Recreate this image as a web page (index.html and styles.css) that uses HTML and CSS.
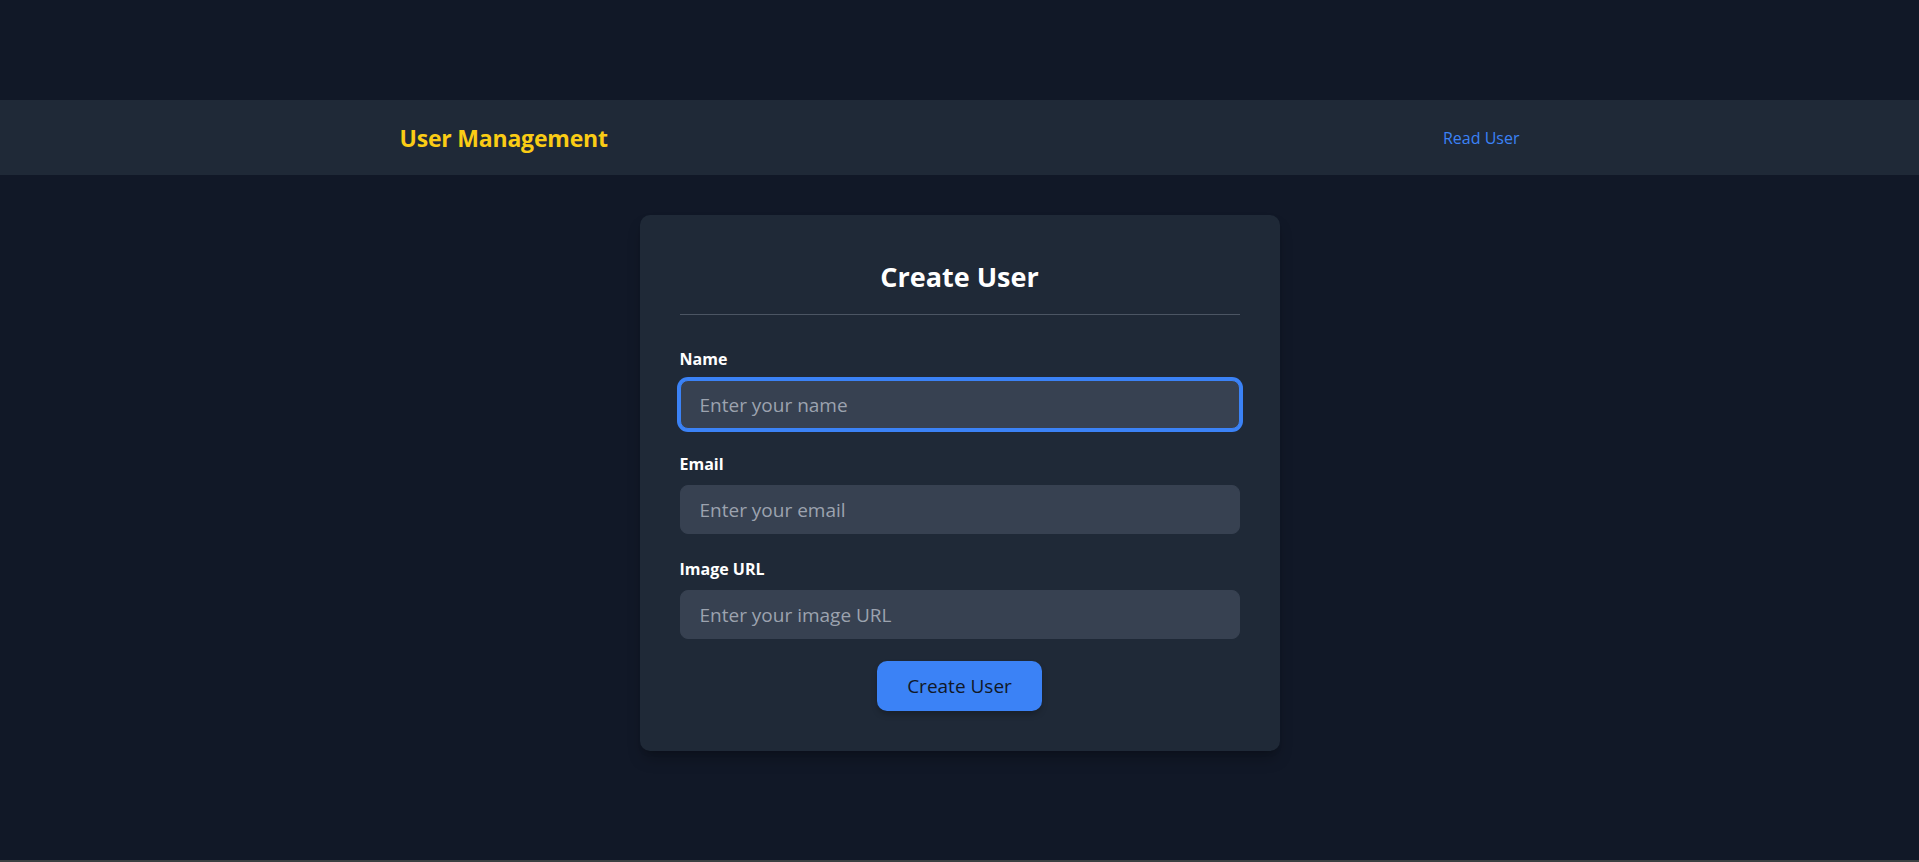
FILE: index.html
```html
<!DOCTYPE html>
<html lang="en">
<head>
<meta charset="utf-8">
<title>User Management</title>
<link rel="stylesheet" href="styles.css">
</head>
<body>
<div class="page">
  <header class="navbar">
    <div class="nav-inner">
      <span class="brand">User Management</span>
      <a class="nav-link" href="#">Read User</a>
    </div>
  </header>
  <main class="main">
    <form class="card">
      <h1 class="card-title">Create User</h1>
      <hr class="divider">
      <div class="field">
        <label class="label" for="name">Name</label>
        <input class="input input-focus" id="name" type="text" placeholder="Enter your name">
      </div>
      <div class="field">
        <label class="label" for="email">Email</label>
        <input class="input" id="email" type="email" placeholder="Enter your email">
      </div>
      <div class="field field-last">
        <label class="label" for="image">Image URL</label>
        <input class="input" id="image" type="text" placeholder="Enter your image URL">
      </div>
      <div class="actions">
        <button class="btn" type="button">Create User</button>
      </div>
    </form>
  </main>
</div>
</body>
</html>
```

FILE: styles.css
```css
* { box-sizing: border-box; }
html, body { margin: 0; padding: 0; }
body {
  background: #111827;
  font-family: "Open Sans", "Noto Sans", "Liberation Sans", sans-serif;
  color: #ffffff;
}
.page {
  min-height: 100vh;
  padding-top: 100px;
  border-bottom: 2px solid #3b4143;
  display: flex;
  flex-direction: column;
}
.navbar {
  background: #1f2937;
  height: 75px;
  display: flex;
  align-items: center;
}
.nav-inner {
  width: 1152px;
  margin: 0 auto;
  padding: 0 16px;
  display: flex;
  justify-content: space-between;
  align-items: center;
}
.brand {
  color: #facc15;
  font-weight: 700;
  font-size: 23px;
  letter-spacing: -0.2px;
  line-height: 32px;
}
.nav-link {
  color: #3b82f6;
  text-decoration: none;
  font-size: 16px;
  line-height: 24px;
}
.main {
  display: flex;
  justify-content: center;
  padding-top: 40px;
}
.card {
  width: 640px;
  background: #1f2937;
  border-radius: 10px;
  padding: 40px;
  box-shadow: 0 10px 15px -3px rgba(0,0,0,0.25), 0 4px 6px -4px rgba(0,0,0,0.2);
}
.card-title {
  margin: 0;
  text-align: center;
  font-size: 27px;
  font-weight: 700;
  line-height: 44px;
  color: #ffffff;
}
.divider {
  border: 0;
  height: 1px;
  background: #4b5563;
  margin: 15px 0 32px;
}
.field {
  display: flex;
  flex-direction: column;
  gap: 9px;
  margin-bottom: 23px;
}
.field-last { margin-bottom: 22px; }
.label {
  font-size: 16px;
  font-weight: 700;
  line-height: 24px;
  color: #ffffff;
}
.input {
  height: 49px;
  width: 100%;
  background: #374151;
  border: 1px solid #374151;
  border-radius: 8px;
  padding: 0 19px;
  font-family: inherit;
  font-size: 19px;
  color: #ffffff;
  outline: none;
}
.input::placeholder { color: #9ca3af; }
.input-focus {
  border-color: #3b82f6;
  box-shadow: 0 0 0 3px #3b82f6;
}
.actions {
  display: flex;
  justify-content: center;
}
.btn {
  height: 50px;
  padding: 0 30px;
  background: #3b82f6;
  color: #111827;
  border: 0;
  border-radius: 10px;
  font-family: inherit;
  font-size: 19px;
  box-shadow: 0 4px 6px -1px rgba(0,0,0,0.25);
}
```
